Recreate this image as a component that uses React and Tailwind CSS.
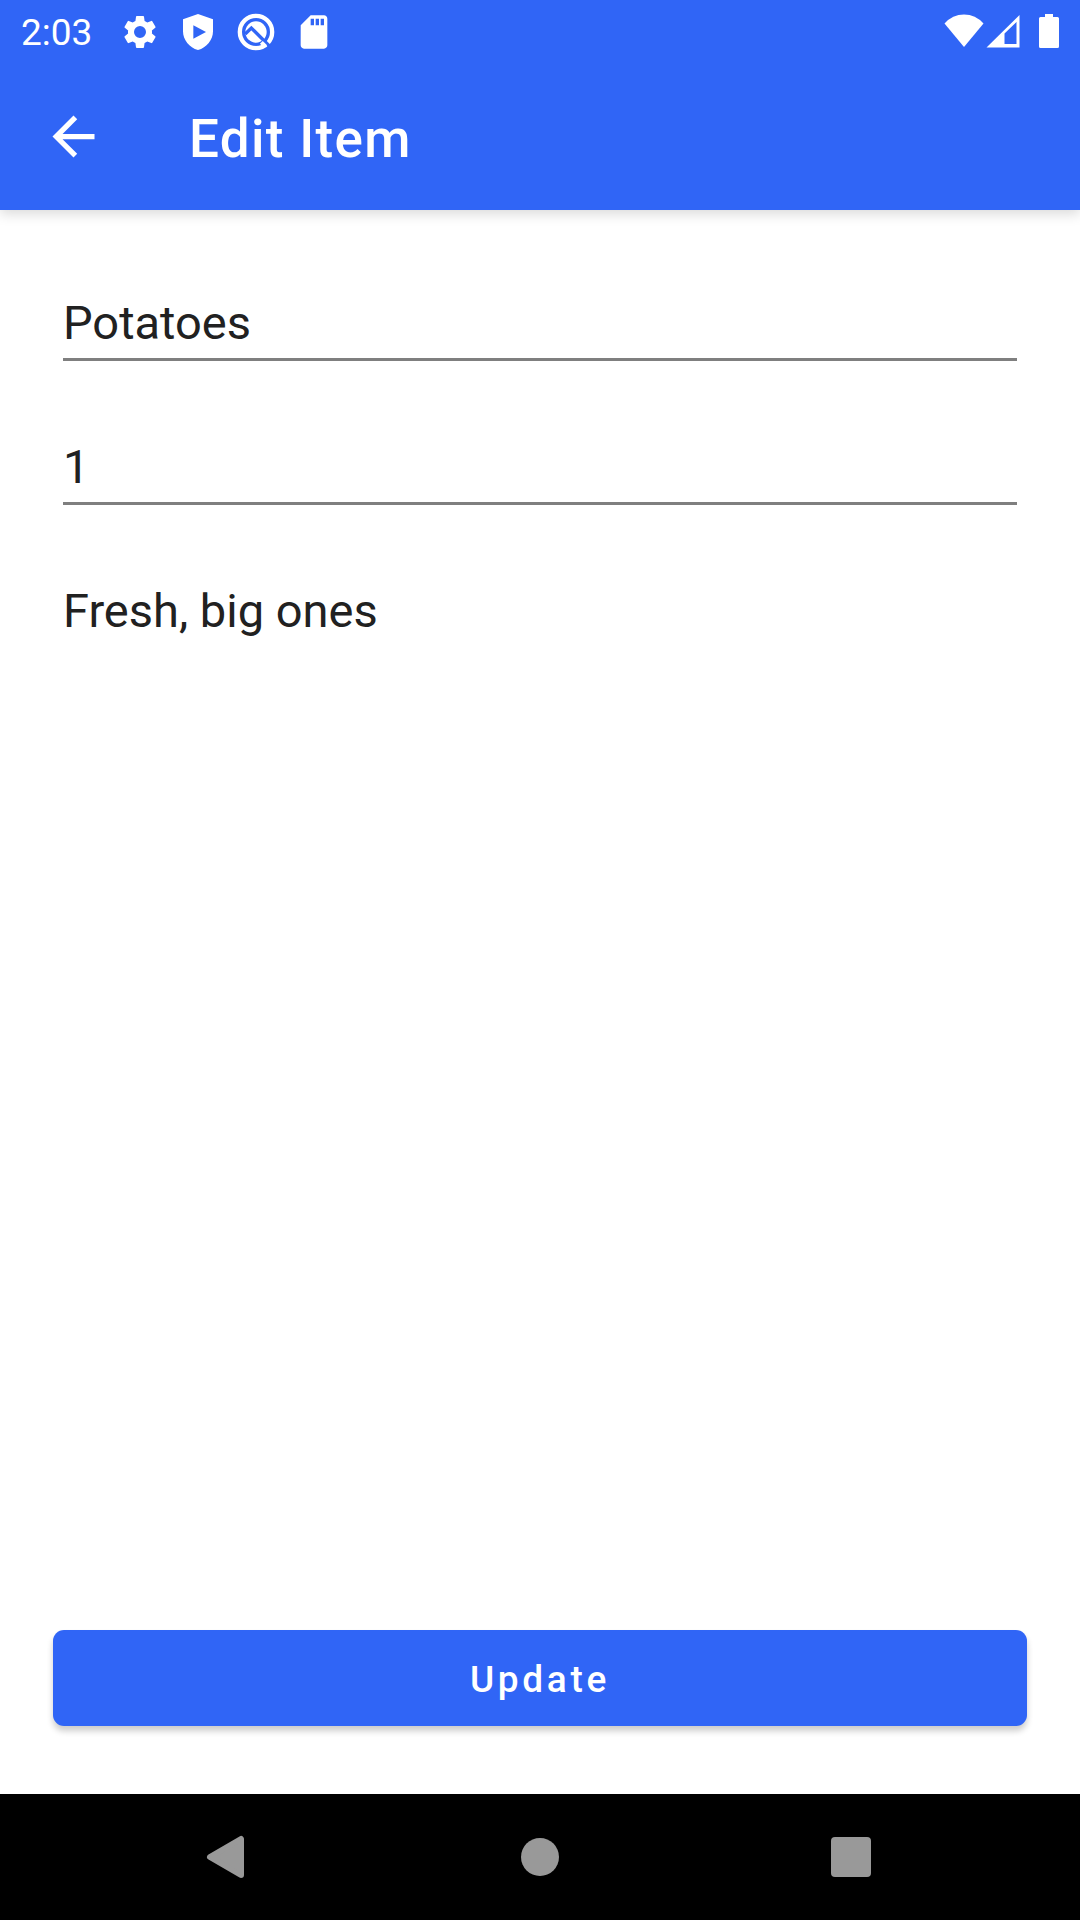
import React from "react";

function Icon({ children, className = "size-10" }) {
  return (
    <svg viewBox="0 0 24 24" fill="currentColor" className={className} aria-hidden="true">
      {children}
    </svg>
  );
}

function StatusBar() {
  return (
    <div className="flex h-[63px] items-center justify-between px-[21px]">
      <div className="flex items-center gap-[18px]">
        <span className="w-[81px] pt-0.5 text-[37px] leading-[44px]">2:03</span>
        <Icon>
          <path d="M19.14 12.94c.04-.3.06-.61.06-.94 0-.32-.02-.64-.07-.94l2.03-1.58a.49.49 0 0 0 .12-.61l-1.92-3.32a.49.49 0 0 0-.59-.22l-2.39.96c-.5-.38-1.03-.7-1.62-.94l-.36-2.54a.48.48 0 0 0-.48-.41h-3.84a.47.47 0 0 0-.47.41l-.36 2.54c-.59.24-1.13.57-1.62.94l-2.39-.96a.48.48 0 0 0-.59.22L2.74 8.87a.47.47 0 0 0 .12.61l2.03 1.58c-.05.3-.09.63-.09.94s.02.64.07.94l-2.03 1.58a.49.49 0 0 0-.12.61l1.92 3.32c.12.22.37.29.59.22l2.39-.96c.5.38 1.03.7 1.62.94l.36 2.54c.05.24.24.41.48.41h3.84c.24 0 .44-.17.47-.41l.36-2.54c.59-.24 1.13-.56 1.62-.94l2.39.96c.22.08.47 0 .59-.22l1.92-3.32a.47.47 0 0 0-.12-.61zM12 15.6A3.6 3.6 0 1 1 12 8.4a3.6 3.6 0 0 1 0 7.2z" />
        </Icon>
        <Icon>
          <path fillRule="evenodd" d="M12 1.2 3 4.3v7.2c0 5.2 3.8 9.8 9 11.3 5.2-1.5 9-6.1 9-11.3V4.3zM9.2 7.9v8.200l7.600-4.100z" />
        </Icon>
        <Icon>
          <circle cx="12" cy="12" r="9.7" fill="none" stroke="currentColor" strokeWidth="2.6" />
          <circle cx="12" cy="12" r="6.4" />
          <path d="M5.500 13.200 9.200 9.600 20 20.400" fill="none" stroke="#3065f6" strokeWidth="2" />
          <path d="M15.200 18.200 17.800 20.800" fill="none" stroke="currentColor" strokeWidth="2.400" />
        </Icon>
        <Icon>
          <path d="M18 2h-8L4.02 8 4 20c0 1.1.9 2 2 2h12c1.1 0 2-.9 2-2V4c0-1.1-.9-2-2-2zm-6 6h-2V4h2v4zm3 0h-2V4h2v4zm3 0h-2V4h2v4z" />
        </Icon>
      </div>
      <div className="flex items-center pb-0.5">
        <svg viewBox="0 0 40 34" className="h-[34px] w-10" fill="currentColor" aria-hidden="true">
          <path d="M20 33 0.500 9.500Q8.500 0.500 20 0.500t19.500 9z" />
        </svg>
        <svg viewBox="0 0 34 34" className="ml-0.5 h-[34px] w-[34px]" fill="currentColor" aria-hidden="true">
          <path fillRule="evenodd" d="M0.500 33.500 33.500 1v32.500zM18.500 19.500v10.500h12V8z" />
        </svg>
        <svg viewBox="0 0 20 34" className="ml-[19px] h-[34px] w-5" fill="currentColor" aria-hidden="true">
          <path d="M6 0h8v3h4.500q1.500 0 1.500 1.500v28q0 1.500-1.500 1.500h-17q-1.500 0-1.500-1.500v-28q0-1.500 1.500-1.500h4.500z" />
        </svg>
      </div>
    </div>
  );
}

const fieldText = "w-full bg-transparent text-[47px] leading-[56px] text-[#212121] outline-none";
const lineField = "h-[67px] border-b-[3px] border-[#7f7f7f] pb-2";

export default function App() {
  return (
    <div className="flex min-h-screen flex-col bg-white font-[Roboto,sans-serif]">
      <header className="bg-[#3065f6] text-white shadow-[0_4px_12px_rgba(0,0,0,0.15)]">
        <StatusBar />
        <div className="flex h-[147px] items-center px-[42px]">
          <button type="button" aria-label="Back" className="size-[63px]">
            <Icon className="size-[63px]">
              <path d="M20 11H7.83l5.59-5.59L12 4l-8 8 8 8 1.41-1.41L7.83 13H20v-2z" />
            </Icon>
          </button>
          <h1 className="pl-[84px] pt-1 text-[53px] font-medium leading-[62px] tracking-wide">Edit Item</h1>
        </div>
      </header>

      <form className="flex flex-1 flex-col" onSubmit={(e) => e.preventDefault()}>
        <div className="flex flex-1 flex-col gap-[77px] px-[63px] pt-[84px]">
          <input type="text" aria-label="Name" defaultValue="Potatoes" className={`${fieldText} ${lineField}`} />
          <input type="text" inputMode="numeric" aria-label="Quantity" defaultValue="1" className={`${fieldText} ${lineField}`} />
          <textarea aria-label="Notes" defaultValue="Fresh, big ones" className={`${fieldText} flex-1 resize-none pt-px`} />
        </div>
        <div className="px-[53px] pb-[68px] pt-10">
          <button type="submit" className="h-24 w-full rounded-[11px] bg-[#3065f6] pt-1 text-[37px] font-medium leading-[44px] tracking-widest text-white shadow-[0_5px_6px_rgba(0,0,0,0.2)]">
            Update
          </button>
        </div>
      </form>

      <nav aria-label="System" className="flex h-[126px] items-center justify-around bg-black px-[70px] text-[#999999]">
        <button type="button" aria-label="Back" className="size-12">
          <svg viewBox="0 0 48 48" className="size-12" fill="currentColor" stroke="currentColor" strokeWidth="6" strokeLinejoin="round" aria-hidden="true">
            <path d="M7 24 38 6v36z" />
          </svg>
        </button>
        <button type="button" aria-label="Home" className="size-12">
          <svg viewBox="0 0 48 48" className="size-12" fill="currentColor" aria-hidden="true">
            <circle cx="24" cy="24" r="19" />
          </svg>
        </button>
        <button type="button" aria-label="Recent apps" className="size-12">
          <svg viewBox="0 0 48 48" className="size-12" fill="currentColor" aria-hidden="true">
            <rect x="2" y="4" width="40" height="40" rx="4" />
          </svg>
        </button>
      </nav>
    </div>
  );
}
